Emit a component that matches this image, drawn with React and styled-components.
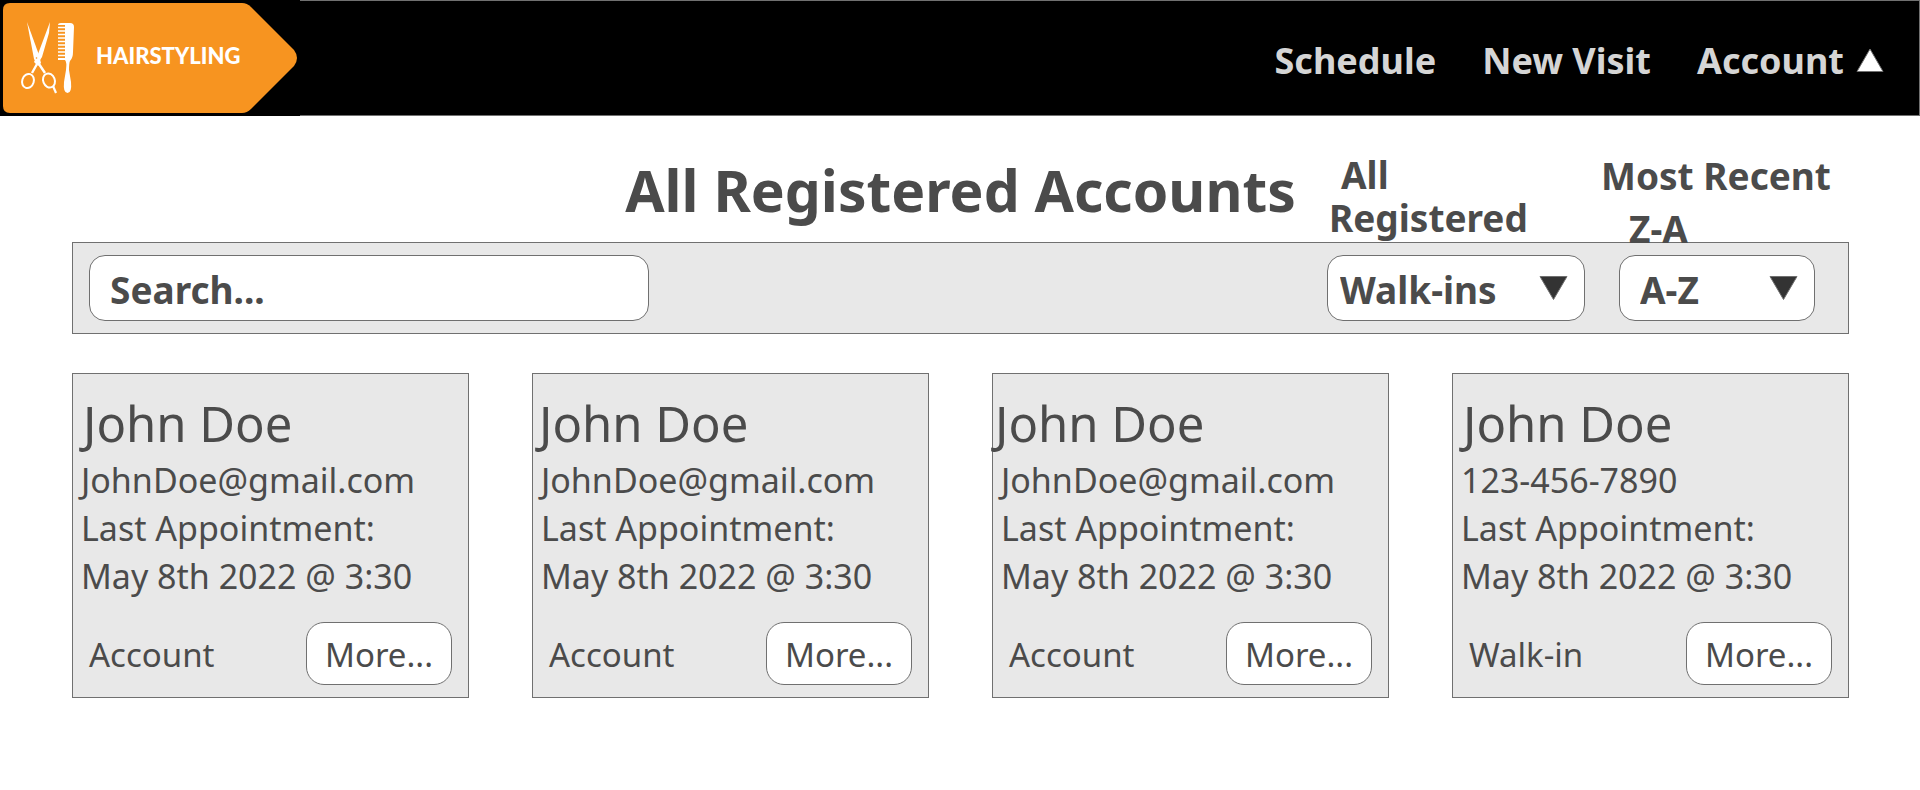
import React from "react";
import styled, { createGlobalStyle } from "styled-components";

const GlobalStyle = createGlobalStyle`
  *, *::before, *::after { box-sizing: border-box; }
  body {
    margin: 0;
    background: #fff;
    color: #4b4b4b;
    font-family: "Noto Sans", "Open Sans", sans-serif;
  }
  button, input, select { font: inherit; color: inherit; }
`;

const Header = styled.header`
  display: flex;
  height: 116px;
  background: #000;
`;

const HomeLink = styled.a`
  display: block;
  flex: none;
  width: 300px;
`;

const LogoText = styled.text`
  fill: #fff;
  font-family: Lato, "Open Sans", sans-serif;
  font-size: 22px;
  font-weight: 900;
`;

const Nav = styled.nav`
  display: flex;
  flex: 1;
  align-items: center;
  justify-content: flex-end;
  gap: 46px;
  padding: 4px 35px 0 0;
  border: solid #707070;
  border-width: 1px 1px 1px 0;
  color: #d5d5d5;
  font-size: 36px;
  font-weight: 700;
`;

const NavLink = styled.a`
  color: inherit;
  text-decoration: none;
`;

const NavButton = styled.button`
  display: flex;
  align-items: center;
  gap: 12px;
  padding: 0;
  border: 0;
  background: none;
  font-weight: 700;
`;

const Page = styled.main`
  padding: 40px 71px 40px 72px;
`;

const Title = styled.h1`
  margin: 0 0 18px;
  font-size: 57px;
  line-height: 68px;
  text-align: center;
`;

const Toolbar = styled.form`
  display: flex;
  align-items: center;
  gap: 34px;
  height: 92px;
  padding: 0 33px 0 16px;
  border: 1px solid #707070;
  background: #e8e8e8;
  font-size: 37px;
  font-weight: 700;
`;

const SearchInput = styled.input`
  flex: 0 1 560px;
  min-width: 0;
  height: 66px;
  margin-right: auto;
  padding: 2px 20px 0;
  border: 1px solid #707070;
  border-radius: 16px;
  background: #fff;
  &::placeholder { color: #4b4b4b; opacity: 1; }
`;

const Filter = styled.div`
  position: relative;
  flex: none;
  width: ${(p) => p.$width}px;
`;

const FilterSelect = styled.select`
  display: block;
  width: 100%;
  height: 66px;
  padding: 2px 48px 0 ${(p) => p.$inset}px;
  border: 1px solid #707070;
  border-radius: 16px;
  background: #fff;
  appearance: none;
`;

const SelectArrow = styled.svg`
  position: absolute;
  top: 21px;
  right: 17px;
  pointer-events: none;
`;

const OpenChoices = styled.ul`
  position: absolute;
  bottom: 100%;
  left: ${(p) => p.$left}px;
  margin: 0 0 ${(p) => p.$lift}px;
  padding: 0;
  list-style: none;
  white-space: nowrap;
`;

const Choice = styled.button`
  display: block;
  height: ${(p) => p.$height}px;
  padding: 0 0 0 ${(p) => p.$inset}px;
  border: 0;
  background: none;
  font-weight: 700;
  line-height: 43px;
`;

const CardGrid = styled.section`
  display: grid;
  grid-template-columns: repeat(4, minmax(0, 1fr));
  gap: 63px;
  margin-top: 39px;
`;

const Card = styled.article`
  padding: 18px 0 12px;
  border: 1px solid #707070;
  background: #e8e8e8;
  white-space: nowrap;
`;

const CardName = styled.h2`
  margin: 0 0 2px;
  padding-left: ${(p) => p.$inset}px;
  font-size: 49px;
  font-weight: 400;
  line-height: 62px;
`;

const CardLine = styled.p`
  margin: 0;
  padding-left: 8px;
  font-size: 34px;
  line-height: 48px;
`;

const CardFooter = styled.footer`
  display: flex;
  align-items: center;
  justify-content: space-between;
  margin-top: 22px;
  padding: 0 16px;
  font-size: 33px;
`;

const Kind = styled.span`
  padding-top: 2px;
`;

const MoreButton = styled.button`
  width: 146px;
  height: 63px;
  padding: 2px 0 0;
  border: 1px solid #707070;
  border-radius: 18px;
  background: #fff;
`;

function Logo() {
  return (
    <svg width="300" height="116" viewBox="0 0 300 116" role="img" aria-label="Hairstyling">
      <path
        fill="#f79420"
        d="M10 3H242Q247 3 251 7L294 50Q300 58 294 66L251 109Q247 113 242 113H10Q3 113 3 106V10Q3 3 10 3Z"
      />
      <g fill="#fff">
        <path d="M27 22L39 55L41 63L38 66L34 59Z" />
        <path d="M50 22L49 33L42 57L37 65L34 62L38 54Z" />
        <path d="M58 25Q58 23 61 23H70Q74 23 74 27L73 52Q73 58 70 61Q69 63 69 70L71 82Q72 93 67.500 93Q63 93 64 82L66 70Q67 62 65 60H58V58H65V25Z" />
      </g>
      <g fill="none" stroke="#fff">
        <path strokeWidth="2.4" d="M37 64L32 73M39 64L45 73" />
        <ellipse cx="28" cy="81" rx="5.8" ry="7.2" strokeWidth="2" transform="rotate(18 28 81)" />
        <ellipse cx="49" cy="80.500" rx="5.8" ry="7.2" strokeWidth="2" transform="rotate(-22 49 80.5)" />
        <path strokeWidth="2.2" d="M53 86L56 93" />
        <path strokeWidth="1.4" d="M58 27.500H66M58 31H66M58 34.500H66M58 38H66M58 41.500H66M58 45H66M58 48.500H66M58 52H66M58 55.500H66" />
      </g>
      <circle cx="36.500" cy="58" r="0.8" fill="#f79420" />
      <LogoText x="96" y="64">HAIRSTYLING</LogoText>
    </svg>
  );
}

function Arrow() {
  return (
    <SelectArrow width="29" height="25" viewBox="0 0 29 25" aria-hidden="true">
      <path d="M1 0.500H28L14.500 23.500Z" fill="#333" stroke="#707070" />
    </SelectArrow>
  );
}

const accounts = [
  { contact: "JohnDoe@gmail.com", kind: "Account", nameInset: 10 },
  { contact: "JohnDoe@gmail.com", kind: "Account", nameInset: 6 },
  { contact: "JohnDoe@gmail.com", kind: "Account", nameInset: 2 },
  { contact: "123-456-7890", kind: "Walk-in", nameInset: 10 },
];

export default function App() {
  return (
    <>
      <GlobalStyle />
      <Header>
        <HomeLink href="#home">
          <Logo />
        </HomeLink>
        <Nav>
          <NavLink href="#schedule">Schedule</NavLink>
          <NavLink href="#new-visit">New Visit</NavLink>
          <NavButton type="button">
            Account
            <svg width="28" height="24" viewBox="0 0 28 24" aria-hidden="true">
              <path d="M1 23.500H27L14 1Z" fill="#fff" stroke="#707070" />
            </svg>
          </NavButton>
        </Nav>
      </Header>
      <Page>
        <Title>All Registered Accounts</Title>
        <Toolbar>
          <SearchInput type="search" placeholder="Search..." aria-label="Search accounts" />
          <Filter $width={258}>
            <OpenChoices $left={2} $lift={16}>
              <li><Choice type="button" $height={43} $inset={12}>All</Choice></li>
              <li><Choice type="button" $height={43} $inset={0}>Registered</Choice></li>
            </OpenChoices>
            <FilterSelect $inset={12} aria-label="Account type" defaultValue="Walk-ins">
              <option>Walk-ins</option>
            </FilterSelect>
            <Arrow />
          </Filter>
          <Filter $width={196}>
            <OpenChoices $left={-18} $lift={0}>
              <li><Choice type="button" $height={53} $inset={0}>Most Recent</Choice></li>
              <li><Choice type="button" $height={53} $inset={28}>Z-A</Choice></li>
            </OpenChoices>
            <FilterSelect $inset={20} aria-label="Sort order" defaultValue="A-Z">
              <option>A-Z</option>
            </FilterSelect>
            <Arrow />
          </Filter>
        </Toolbar>
        <CardGrid>
          {accounts.map((account, index) => (
            <Card key={index}>
              <CardName $inset={account.nameInset}>John Doe</CardName>
              <CardLine>{account.contact}</CardLine>
              <CardLine>Last Appointment:</CardLine>
              <CardLine>May 8th 2022 @ 3:30</CardLine>
              <CardFooter>
                <Kind>{account.kind}</Kind>
                <MoreButton type="button">More...</MoreButton>
              </CardFooter>
            </Card>
          ))}
        </CardGrid>
      </Page>
    </>
  );
}
